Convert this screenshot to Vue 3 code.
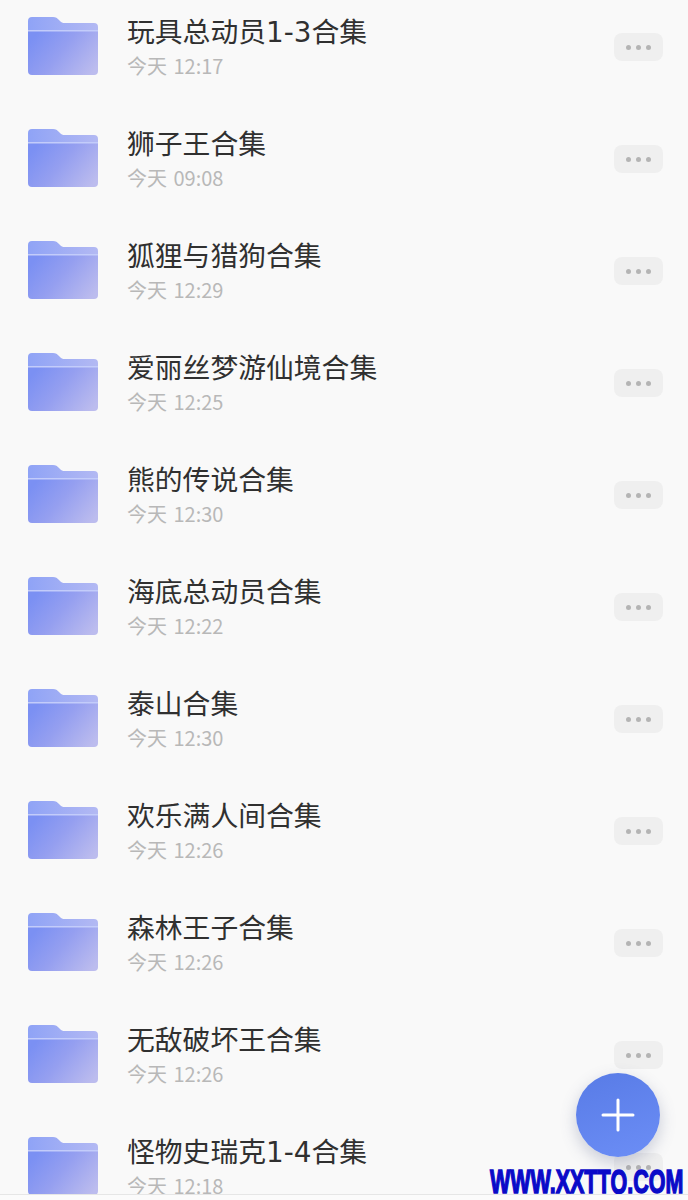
<template>
  <div class="page">
    <ul class="list">
      <li v-for="(item, i) in items" :key="item.name" class="row">
        <svg class="folder" width="70" height="60" viewBox="0 0 70 60">
          <defs>
            <linearGradient :id="'back' + i" x1="0" y1="0" x2="1" y2="0">
              <stop offset="0" stop-color="#8fa3f6" />
              <stop offset="1" stop-color="#b3b9f3" />
            </linearGradient>
            <linearGradient :id="'front' + i" x1="0" y1="0.3" x2="1" y2="0.8">
              <stop offset="0" stop-color="#7b90f3" />
              <stop offset="0.45" stop-color="#959ff0" />
              <stop offset="1" stop-color="#bcbcee" />
            </linearGradient>
          </defs>
          <path :fill="'url(#back' + i + ')'" d="M0 4a4 4 0 0 1 4-4h21c3 0 4 1 6 3l1 1c1.500 1.500 2.500 2 4.500 2h29.500a4 4 0 0 1 4 4v10H0z" />
          <path :fill="'url(#front' + i + ')'" d="M0 14h70v40a4 4 0 0 1-4 4H4a4 4 0 0 1-4-4z" />
          <rect x="0" y="13" width="70" height="1.500" fill="#c3ccfa" />
        </svg>
        <div class="info">
          <div class="name">{{ item.name }}</div>
          <div class="time">今天 {{ item.time }}</div>
        </div>
        <button class="more" type="button" aria-label="更多">
          <i></i><i></i><i></i>
        </button>
      </li>
    </ul>

    <button class="fab" type="button" aria-label="新建">
      <svg width="34" height="34" viewBox="0 0 34 34">
        <path d="M17 2v30M2 17h30" stroke="#fff" stroke-width="3" stroke-linecap="round" fill="none" />
      </svg>
    </button>
    <div class="watermark">WWW.XXTTQ.COM</div>
    <div class="bottom-bar"></div>
  </div>
</template>

<script setup>
const items = [
  { name: '玩具总动员1-3合集', time: '12:17' },
  { name: '狮子王合集', time: '09:08' },
  { name: '狐狸与猎狗合集', time: '12:29' },
  { name: '爱丽丝梦游仙境合集', time: '12:25' },
  { name: '熊的传说合集', time: '12:30' },
  { name: '海底总动员合集', time: '12:22' },
  { name: '泰山合集', time: '12:30' },
  { name: '欢乐满人间合集', time: '12:26' },
  { name: '森林王子合集', time: '12:26' },
  { name: '无敌破坏王合集', time: '12:26' },
  { name: '怪物史瑞克1-4合集', time: '12:18' }
]
</script>

<style scoped>
.page {
  position: relative;
  width: 688px;
  height: 1200px;
  overflow: hidden;
  background: #f9f9f9;
  font-family: "Noto Sans CJK SC", "Roboto", sans-serif;
}

.list {
  list-style: none;
  margin: -9px 0 0;
  padding: 0;
}
.row {
  display: flex;
  align-items: center;
  height: 112px;
  padding: 0 25px 0 28px;
  box-sizing: border-box;
}
.folder {
  flex: none;
}
.info {
  flex: 1;
  margin-left: 29px;
  min-width: 0;
}
.name {
  font-family: "DejaVu Sans", "Noto Sans CJK SC", sans-serif;
  font-size: 27.8px;
  line-height: 40px;
  color: #303030;
}
.time {
  margin-top: -2px;
  font-size: 20px;
  line-height: 30px;
  word-spacing: 2px;
  color: #b8b8b8;
}
.more {
  flex: none;
  display: flex;
  align-items: center;
  justify-content: center;
  gap: 5px;
  width: 49px;
  height: 28px;
  padding: 0;
  border: 0;
  border-radius: 8px;
  background: #efefef;
}
.more i {
  width: 5px;
  height: 5px;
  border-radius: 50%;
  background: #b4b4b4;
}

.fab {
  position: absolute;
  left: 576px;
  top: 1073px;
  display: flex;
  align-items: center;
  justify-content: center;
  width: 84px;
  height: 84px;
  padding: 0;
  border: 0;
  border-radius: 50%;
  background: linear-gradient(160deg, #587be6, #6c8ef6);
  box-shadow: 0 6px 16px rgba(90, 100, 140, 0.3);
}
.watermark {
  position: absolute;
  left: 490px;
  top: 1163px;
  font-family: "Liberation Sans", sans-serif;
  font-size: 34px;
  line-height: 36px;
  font-weight: 700;
  white-space: nowrap;
  color: #0a0ac8;
  -webkit-text-stroke: 1.5px #0a0ac8;
  transform: scaleX(0.632);
  transform-origin: left top;
}
.bottom-bar {
  position: absolute;
  left: 0;
  right: 0;
  bottom: 0;
  height: 6px;
  background: #fbfbfb;
  border-top: 1px solid #e6e6e6;
  box-sizing: border-box;
}
</style>
